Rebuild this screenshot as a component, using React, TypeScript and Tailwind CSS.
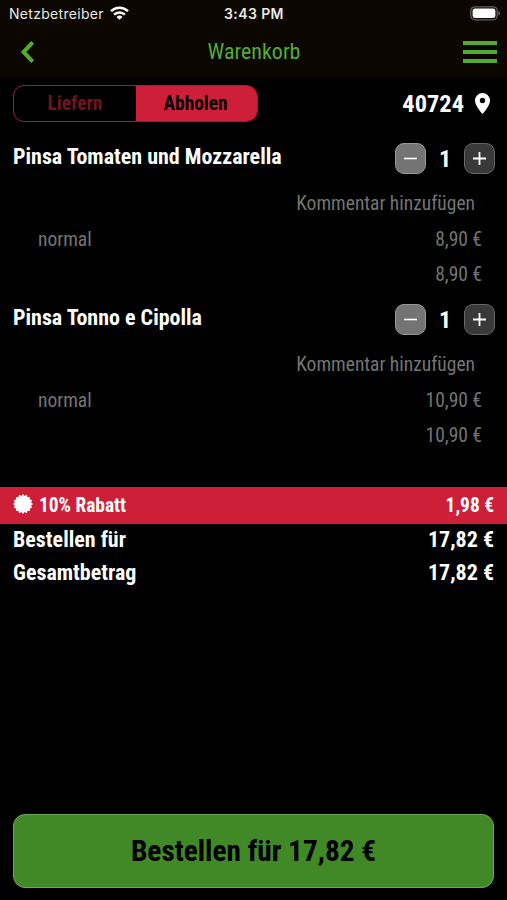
import React from "react";

const condensed = "font-['Roboto_Condensed','Roboto',sans-serif] [font-stretch:75%]";

function StatusBar() {
  return (
    <div className="grid h-[27px] grid-cols-3 items-center pl-[9px] pr-[6px] font-['Inter',sans-serif] text-[14px] text-[#e8e8e6]">
      <div className="flex items-center gap-[6px]">
        <span className="tracking-[0.3px]">Netzbetreiber</span>
        <svg width="19" height="14" viewBox="0 0 19 14" className="-mt-px" fill="none" stroke="#fff" strokeWidth="2.5">
          <path d="M1 5.2a12.2 12.2 0 0 1 17 0" />
          <path d="M4.1 8.6a7.7 7.7 0 0 1 10.8 0" />
          <path d="M9.5 13.8 6.5 10.9a4.3 4.3 0 0 1 6 0Z" fill="#fff" stroke="none" />
        </svg>
      </div>
      <span className="pr-[2px] text-center font-semibold tracking-[0.4px]">3:43 PM</span>
      <svg className="justify-self-end" width="31" height="15" viewBox="0 0 31 15">
        <rect x=".8" y=".8" width="26.4" height="13" rx="4" fill="none" stroke="#62605b" strokeWidth="1.3" />
        <rect x="2.6" y="2.6" width="22.8" height="9.4" rx="2.3" fill="#fff" />
        <path d="M28.5 5v4.6c2-.8 2-3.8 0-4.6Z" fill="#77746f" />
      </svg>
    </div>
  );
}

function Item({ name, price }: { name: string; price: string }) {
  return (
    <section className="h-[161px]">
      <div className="flex h-[47px] items-start justify-between pl-[13px] pr-3 pt-[4px]">
        <h2 className="pt-px text-[22px] font-bold leading-[26px] text-white">{name}</h2>
        <div className="flex h-[31px] items-center">
          <button className="flex size-[31px] items-center justify-center rounded-[9px] border border-[#999] bg-[#747474]">
            <svg width="15" height="15" viewBox="0 0 15 15" stroke="#fff" strokeWidth="1.6"><path d="M1 7.5h13" /></svg>
          </button>
          <span className="w-[38px] pt-px text-center text-[24px] font-bold leading-[31px] text-white">1</span>
          <button className="flex size-[31px] items-center justify-center rounded-[9px] border border-[#666] bg-[#393939]">
            <svg width="15" height="15" viewBox="0 0 15 15" stroke="#fff" strokeWidth="1.8"><path d="M1 7.5h13M7.5 1v13" /></svg>
          </button>
        </div>
      </div>
      <div className="text-[19.5px] leading-[35.5px] text-[#747474]">
        <div className="pr-8 text-right">Kommentar hinzufügen</div>
        <div className="flex justify-between pl-[38px] pr-[25px]"><span>normal</span><span>{price}</span></div>
        <div className="pr-[25px] text-right">{price}</div>
      </div>
    </section>
  );
}

const burst = Array.from({ length: 32 }, (_, i) => {
  const r = i % 2 ? 8.2 : 10;
  const a = (i * Math.PI) / 16;
  return `${10 + r * Math.sin(a)},${10 - r * Math.cos(a)}`;
}).join(" ");

export default function App() {
  return (
    <main className={`flex h-[900px] w-[507px] flex-col overflow-hidden bg-black ${condensed}`}>
      <header className="h-[78px] bg-[#0b0700]">
        <StatusBar />
        <div className="grid h-[50px] grid-cols-3 items-center pl-[20px] pr-[10px]">
          <svg width="16" height="22" viewBox="0 0 16 22" fill="none" stroke="#53ac32" strokeWidth="4"><path d="M12.7 1.3 3.5 11l9.2 9.7" /></svg>
          <h1 className="pr-[9px] text-center text-[22px] leading-[50px] text-[#53ac32]">Warenkorb</h1>
          <div className="flex w-[34px] flex-col gap-[5px] justify-self-end">
            <i className="h-[4px] bg-[#53ac32]" /><i className="h-[4px] bg-[#53ac32]" /><i className="h-[4px] bg-[#53ac32]" />
          </div>
        </div>
      </header>
      <div className="flex h-[61px] items-start justify-between pl-[13px] pr-[17px] pt-[7px]">
        <div className="flex h-[37px] w-[245px] overflow-hidden rounded-[11px] border border-[#a51b2f] text-[19.4px] font-bold leading-[35px]">
          <div className="w-[122px] text-center text-[#701322]">Liefern</div>
          <div className="flex-1 bg-[#cd1f37] pr-[2px] text-center text-black">Abholen</div>
        </div>
        <div className="flex h-[37px] items-center gap-[11px] text-[24.4px] font-bold text-white">
          <span className="pt-[2px]">40724</span>
          <svg width="15" height="21" viewBox="0 0 15 21" className="-mt-px"><path fillRule="evenodd" fill="#fff" d="M7.5 0A7.5 7.5 0 0 0 0 7.5C0 13 7.5 21 7.5 21S15 13 15 7.5A7.5 7.5 0 0 0 7.5 0Zm0 4.8a2.7 2.7 0 1 1 0 5.4 2.7 2.7 0 0 1 0-5.4Z" /></svg>
        </div>
      </div>
      <Item name="Pinsa Tomaten und Mozzarella" price="8,90 €" />
      <Item name="Pinsa Tonno e Cipolla" price="10,90 €" />
      <div className="mt-[26px] flex h-[37px] items-center justify-between bg-[#cd1f37] px-[13px] text-[19.4px] font-bold text-white">
        <div className="flex items-center gap-[6px]">
          <svg width="20" height="20" viewBox="0 0 20 20" className="-mt-[2px]"><polygon points={burst} fill="#fff" /></svg>
          <span>10% Rabatt</span>
        </div>
        <span>1,98 €</span>
      </div>
      <div className="-mt-px text-[22px] font-bold leading-[33px] text-white">
        <div className="flex justify-between px-[13px]"><span>Bestellen für</span><span>17,82 €</span></div>
        <div className="flex justify-between px-[13px]"><span>Gesamtbetrag</span><span>17,82 €</span></div>
      </div>
      <button className="mx-[13px] mb-[12px] mt-auto h-[74px] rounded-[12px] border border-[#70a75c] bg-[#418826] pt-px text-[29.3px] font-bold text-black">
        Bestellen für 17,82 €
      </button>
    </main>
  );
}
